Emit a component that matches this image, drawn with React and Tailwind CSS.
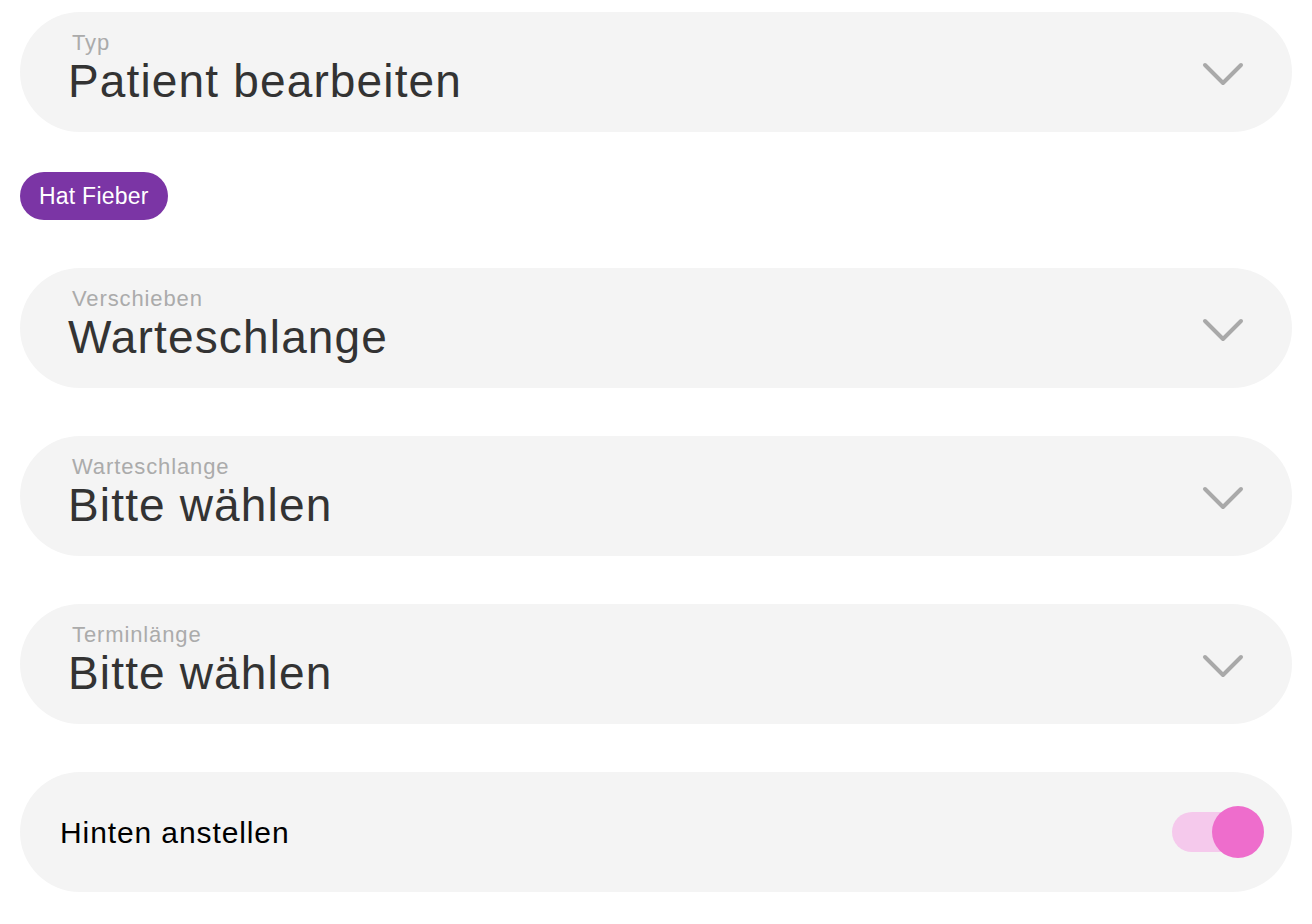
import React, { useState } from 'react'

const FIELDS = [
  { label: 'Verschieben', value: 'Warteschlange' },
  { label: 'Warteschlange', value: 'Bitte wählen' },
  { label: 'Terminlänge', value: 'Bitte wählen' },
]

function Chevron() {
  return (
    <svg width="44" height="28" viewBox="0 0 44 28" className="shrink-0 mt-[6px]">
      <path d="M4 4 L22 22 L40 4" fill="none" stroke="#a9a9a9" strokeWidth="4" strokeLinecap="round" strokeLinejoin="round" />
    </svg>
  )
}

function SelectField({ label, value }) {
  return (
    <div className="h-[120px] rounded-full bg-[#f4f4f4] flex items-center justify-between pl-[48px] pr-[47px]">
      <div className="flex flex-col self-start pt-[20px]">
        <span className="text-[22px] leading-[22px] tracking-[0.04em] text-[#ababab] pl-[4px]">{label}</span>
        <span className="mt-[2px] text-[46px] leading-[50px] tracking-[0.025em] text-[#333333]">{value}</span>
      </div>
      <Chevron />
    </div>
  )
}

export default function App() {
  const [on, setOn] = useState(true)

  return (
    <div className="min-h-screen bg-white px-[20px] pt-[12px] flex flex-col font-['Liberation_Sans',Arial,sans-serif]">
      <SelectField label="Typ" value="Patient bearbeiten" />

      {/* Tags */}
      <div className="flex mt-[40px] mb-[48px]">
        <span className="h-[48px] px-[19px] rounded-full bg-[#7b35a5] text-white text-[23px] tracking-[0.01em] flex items-center">
          Hat Fieber
        </span>
      </div>

      <div className="flex flex-col gap-[48px]">
        {FIELDS.map((f, i) => (
          <SelectField key={i} label={f.label} value={f.value} />
        ))}

        {/* Toggle row */}
        <div className="h-[120px] rounded-full bg-[#f4f4f4] flex items-center justify-between pl-[40px] pr-[28px]">
          <span className="text-[30px] tracking-[0.03em] text-black">Hinten anstellen</span>
          <button
            onClick={() => setOn(!on)}
            className="relative w-[92px] h-[52px] flex items-center"
          >
            <span className="w-[78px] h-[40px] rounded-full bg-[#f5c9ec]" />
            <span className="absolute right-0 top-0 w-[52px] h-[52px] rounded-full bg-[#ee6dcc]" />
          </button>
        </div>
      </div>
    </div>
  )
}
